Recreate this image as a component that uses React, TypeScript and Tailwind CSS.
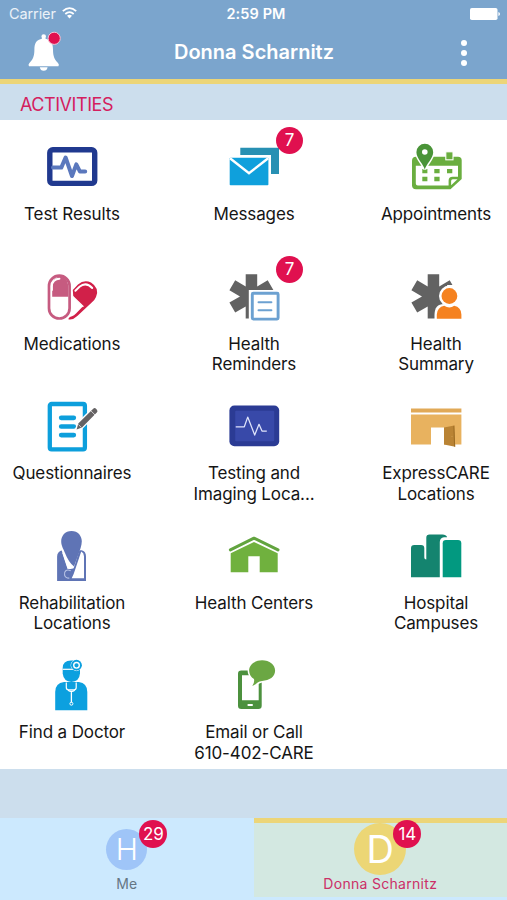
import type { ReactNode } from "react";

function Icon({ children }: { children: ReactNode }) {
  return (
    <svg width="50" height="50" viewBox="0 0 50 50" fill="none" className="block overflow-visible">
      {children}
    </svg>
  );
}

const TestResults = () => (
  <Icon>
    <rect x="2.8" y="7.8" width="44.9" height="33.6" rx="3" stroke="#20398f" strokeWidth="5.4" />
    <path d="M6 25.6H14.3L18.6 15.5L25 34L29.3 22.4L33 29.6H38.2" stroke="#5b78bd" strokeWidth="4" strokeLinecap="round" strokeLinejoin="round" />
  </Icon>
);

const Messages = () => (
  <Icon>
    <path d="M11.3 5.7H50V32H42V13H11.3Z" fill="#2790b3" />
    <rect x="0.7" y="15.7" width="38.7" height="27.6" rx="0.8" fill="#0fa0dc" />
    <path d="M1 16.2L20 31.2L39.2 16.2" stroke="#fff" strokeWidth="2.4" />
  </Icon>
);

const Appointments = () => (
  <Icon>
    <path d="M5 14.7H47Q50.7 14.7 50.7 18.4V37L39.5 47.3H5Q1 47.3 1 43.3V18.7Q1 14.7 5 14.7Z" fill="#6aae3f" />
    <path d="M4.8 23.7H47V34.8H41.5Q37.6 34.8 37.6 38.7V43.6H6.8Q4.8 43.6 4.8 41.6Z" fill="#fff" />
    <path d="M40.1 43.2V39.1Q40.1 37.3 41.9 37.3H46.5Z" fill="#fff" />
    <rect x="34.8" y="9.8" width="7.2" height="8" fill="#6aae3f" stroke="#fff" strokeWidth="1.1" />
    <path d="M11.3 27H16.4V31.3H11.3ZM23.3 27H28.6V31.3H23.3ZM36 27H41.3V31.3H36ZM11.3 34.7H16.4V39.2H11.3ZM23.3 34.7H28.6V39.2H23.3Z" fill="#6aae3f" />
    <path d="M13.8 27.5C12.5 22 5.4 16.5 5.4 10.2A8.4 8.4 0 0 1 22.2 10.2C22.2 16.5 15.1 22 13.8 27.5Z" fill="#4a9438" stroke="#fff" strokeWidth="3" paintOrder="stroke" />
    <circle cx="13.8" cy="10" r="2.8" fill="#fff" />
  </Icon>
);

const Medications = () => (
  <Icon>
    <rect x="2" y="3.7" width="20.6" height="42.8" rx="10.3" stroke="#c65b80" strokeWidth="2.7" />
    <path d="M5.2 24.7V14A7.2 8.5 0 0 1 21.3 14V24.7Z" fill="#c65b80" />
    <path d="M4.9 18V14.2A7.5 7.5 0 0 1 12.4 6.7" stroke="#fff" strokeWidth="2" strokeLinecap="round" />
    <path d="M25.8 18L31 12.6Q37 7 44 10.5Q52.8 16 49 25Q47.8 28 45 30.2L30.3 44Q25.7 48.4 21.3 47.3Q21.5 45.3 25 44.2Q27 43.4 29 41.4L35.8 34.6L26.3 25Z" fill="#d12049" />
    <path d="M28.4 18.8L32.5 14.8Q39 9.5 45.2 16" stroke="#fff" strokeWidth="2" strokeLinecap="round" />
    <path d="M25 23.7L36.4 34.8" stroke="#fff" strokeWidth="1.4" />
  </Icon>
);

const Asterisk = () => (
  <path
    d="M16.7 2.2H28.2V14.4L38.7 8.3L44.5 18.3L34 24.4L44.5 30.5L38.7 40.5L28.2 34.4V46.6H16.7V34.4L6.2 40.5L0.4 30.5L11 24.4L0.4 18.3L6.2 8.3L16.7 14.4Z"
    fill="#626262"
  />
);

const Reminders = () => (
  <Icon>
    <Asterisk />
    <rect x="19.8" y="18" width="33" height="33" fill="#fff" />
    <rect x="23.3" y="21.3" width="25.8" height="25.8" rx="1" stroke="#6ca1d1" strokeWidth="2.9" />
    <path d="M29.5 30.2H42.4M29.5 38.2H42.4" stroke="#6ca1d1" strokeWidth="2" strokeLinecap="round" />
  </Icon>
);

const Summary = () => (
  <Icon>
    <Asterisk />
    <path d="M36 13L50 13V30H40Z" fill="#fff" />
    <circle cx="38.4" cy="24" r="10.4" fill="#fff" />
    <path d="M23.5 49V43Q23.5 32 33 32H52V49Z" fill="#fff" />
    <circle cx="38.4" cy="24" r="7.9" fill="#f58220" />
    <path d="M25.8 46.8V42.5Q26.3 35.2 33.2 33.8Q38.5 37.2 43.2 33.8Q50.2 35.2 50.4 42.5V46.8Z" fill="#f58220" />
  </Icon>
);

const Questionnaires = () => (
  <Icon>
    <rect x="2.8" y="3" width="35.1" height="45.3" rx="1.8" stroke="#0d9fdc" strokeWidth="4.3" />
    <path d="M14.2 16.8H26.8M14.2 25.5H26.8M14.2 34.1H26.8" stroke="#0d9fdc" strokeWidth="4.7" strokeLinecap="round" />
    <path d="M29.6 28.5L31.3 22.6L46.2 7.8Q47.7 6.4 49.2 7.9L49.9 8.7Q51.2 10.2 49.8 11.6L35 26.4Z" fill="#656263" stroke="#fff" strokeWidth="2.8" paintOrder="stroke" />
    <path d="M43.7 9.6L48.1 14M31.4 23.5L34.3 26.4" stroke="#fff" strokeWidth="0.7" />
  </Icon>
);

const Testing = () => (
  <Icon>
    <rect x="0.4" y="4.6" width="49.8" height="40.6" rx="5" fill="#2b3b94" />
    <rect x="6.2" y="9.8" width="39" height="30.5" rx="1" fill="#3849a9" />
    <path d="M6.7 25.8H15.3L18.7 16.1L25.7 34.1L30 23.3L33 30.1H37.8" stroke="#dfe4fb" strokeWidth="1.25" strokeLinejoin="round" />
  </Icon>
);

const ExpressCare = () => (
  <Icon>
    <path d="M0 7.5H50.4V11.5H0Z" fill="#e1a957" />
    <path d="M0 13.5H50.4V43.5H33V26.5H20V43.5H0Z" fill="#e8b25f" />
    <path d="M33 26.5L43.3 24.5L44.2 45.8L33 43.5Z" fill="#b98334" />
    <path d="M42.4 25L43.3 24.5L44.2 45.8L43.1 45.4Z" fill="#9c6c24" />
    <circle cx="41" cy="35.5" r="0.5" fill="#d3a155" />
  </Icon>
);

const Hospital = () => (
  <Icon>
    <path d="M0 46.2V17.2Q0 13.9 3.3 13.9H10Q13.3 13.9 13.3 17.2V26.5Q13.3 28.4 15.3 28.4V6.8Q15.3 3.5 18.6 3.5H31.5Q35 3.5 36.2 6.2H33Q28.8 6.7 28.8 11V46.2Z" fill="#14846f" />
    <path d="M31.7 46.2V12.2Q31.7 8.9 35 8.9H47Q50.3 8.9 50.3 12.2V46.2Z" fill="#029980" />
  </Icon>
);

const Rehab = () => (
  <Icon>
    <path d="M15.5 19.3Q10.1 20.2 10.1 26V49.9H39V25.5Q39 20.4 34.6 19.3Z" fill="#5f74b5" />
    <path d="M14.2 18L20.8 37.5Q23.5 38.8 26.7 37.3L32.8 18Z" fill="#fff" />
    <path d="M24.5 -0.1C31 -0.1 34.8 4.7 34.8 10.3C34.8 14.8 33 19 30.8 25L27 35.5Q21.7 31.5 18 22C15.6 16.5 14.2 14.3 14.2 10.3C14.2 4.7 18 -0.1 24.5 -0.1Z" fill="#5f74b5" />
    <path d="M34.2 20.5Q36.9 21.8 37 25.3V47.3H24.7Q26.6 44 28.6 37.3Z" fill="#fff" />
    <path d="M15.9 21.5L21.3 37.7" stroke="#fff" strokeWidth="1.5" />
    <path d="M23.7 39.8C19.5 37.6 16.8 40.5 17.6 44.1Q18.5 47.2 22.3 47.1" stroke="#b9c4e6" strokeWidth="1.1" />
  </Icon>
);

const HealthCenters = () => (
  <Icon>
    <path d="M1.4 18.9L25 7.2L49 18.9" stroke="#62a43f" strokeWidth="3" strokeLinecap="round" strokeLinejoin="round" />
    <path d="M1.7 22.3L25 11L48.7 22.3V41.2H30.7V25.3H19.3V41.2H1.7Z" fill="#70b13e" />
  </Icon>
);

const Doctor = () => (
  <Icon>
    <path d="M15.7 8Q15.7 0.8 24 0.6H29Q33 2 33 9V13.5Q32.2 21.7 24.4 21.9Q16.7 21.7 15.7 13.5Z" fill="#0ca0df" />
    <path d="M15.7 9.3H26" stroke="#fff" strokeWidth="1.2" />
    <circle cx="29.5" cy="5.2" r="5.4" fill="#0ca0df" stroke="#fff" strokeWidth="1" paintOrder="stroke" />
    <circle cx="29.5" cy="5.3" r="2.8" stroke="#fff" strokeWidth="1.4" />
    <path d="M8.2 50.2V32Q8.2 23.3 17 22.1H31.8Q40.3 23.3 40.3 32V50.2Z" fill="#0ca0df" />
    <path d="M19.3 22.4V27.5Q19.3 29.8 21.6 29.8H27Q29.2 29.8 29.2 27.5V22.4" stroke="#fff" strokeWidth="1.2" />
    <path d="M21 30.3Q24.4 32.7 27.8 30.3M24.4 31V42.5" stroke="#fff" strokeWidth="1.3" />
    <circle cx="24.4" cy="43.7" r="1.5" stroke="#fff" strokeWidth="1" />
  </Icon>
);

const Contact = () => (
  <Icon>
    <path fillRule="evenodd" d="M12.3 10.4H29.4Q32.7 10.4 32.7 13.7V45.7Q32.7 49 29.4 49H12.3Q9 49 9 45.7V13.7Q9 10.4 12.3 10.4ZM13 15.2V40.3H29.7V15.2Z" fill="#4c913e" />
    <rect x="18.4" y="43.9" width="5.6" height="2.2" rx="1" fill="#fff" />
    <path d="M33.1 0.3C40.5 0.3 46.1 4.7 46.1 10.6C46.1 16.6 40.5 20.9 33.1 20.9C28.8 21 27 24.8 23.3 26.1Q25.8 22.8 25 19.1C22 17.2 20.1 14.3 20.1 10.6C20.1 4.7 25.8 0.3 33.1 0.3Z" fill="#6ba743" stroke="#fff" strokeWidth="3" paintOrder="stroke" />
  </Icon>
);

type Activity = { icon: ReactNode; lines: string[]; badge?: number };

const activities: Activity[] = [
  { icon: <TestResults />, lines: ["Test Results"] },
  { icon: <Messages />, lines: ["Messages"], badge: 7 },
  { icon: <Appointments />, lines: ["Appointments"] },
  { icon: <Medications />, lines: ["Medications"] },
  { icon: <Reminders />, lines: ["Health", "Reminders"], badge: 7 },
  { icon: <Summary />, lines: ["Health", "Summary"] },
  { icon: <Questionnaires />, lines: ["Questionnaires"] },
  { icon: <Testing />, lines: ["Testing and", "Imaging Loca..."] },
  { icon: <ExpressCare />, lines: ["ExpressCARE", "Locations"] },
  { icon: <Rehab />, lines: ["Rehabilitation", "Locations"] },
  { icon: <HealthCenters />, lines: ["Health Centers"] },
  { icon: <Hospital />, lines: ["Hospital", "Campuses"] },
  { icon: <Doctor />, lines: ["Find a Doctor"] },
  { icon: <Contact />, lines: ["Email or Call", "610-402-CARE"] },
];

function ActivityTile({ icon, lines, badge }: Activity) {
  return (
    <div className="flex flex-col items-center pt-[22px]">
      <div className="relative">
        {icon}
        {badge !== undefined && (
          <span className="absolute -top-[15.5px] left-[47px] flex size-[27px] items-center justify-center rounded-full bg-[#e0104f] text-[17px] leading-none text-white">
            {badge}
          </span>
        )}
      </div>
      <div className="mt-[12px] text-center text-[17px] leading-[20.4px] tracking-[-0.12px] whitespace-nowrap text-[#151515]">
        {lines.map((line) => (
          <div key={line}>{line}</div>
        ))}
      </div>
    </div>
  );
}

function CountBadge({ count, className }: { count: number; className: string }) {
  return (
    <span className={`absolute flex size-7 items-center justify-center rounded-full bg-[#e0104f] text-[17px] leading-none tracking-[-0.3px] text-white ${className}`}>
      {count}
    </span>
  );
}

export default function App() {
  return (
    <div className="flex h-[900px] w-[507px] flex-col overflow-hidden bg-[#ccdeed] font-['Inter','Liberation_Sans',sans-serif]">
      <header className="h-[79px] shrink-0 bg-[#7ba5cd] text-white">
        <div className="grid h-7 grid-cols-3 items-center pr-[7px] pl-[9px] text-[14.5px] leading-none">
          <div className="flex items-center gap-[7px] text-white/85">
            <span className="tracking-[-0.1px]">Carrier</span>
            <svg width="15" height="12" viewBox="0 0 15 12" fill="none" stroke="#fff" strokeWidth="1.8" className="-mt-[2px] -ml-px">
              <path d="M0.8 4.2Q7.5 -2 14.2 4.2M3.3 7Q7.5 3.2 11.7 7" />
              <path d="M5 8.7Q7.5 6.6 10 8.7L7.5 11.4Z" fill="#fff" stroke="none" />
            </svg>
          </div>
          <div className="pl-[3px] text-center font-semibold tracking-[0.1px]">2:59 PM</div>
          <svg width="30" height="12" viewBox="0 0 30 12" fill="#fff" className="-mt-px justify-self-end">
            <rect width="27.5" height="12" rx="1.8" />
            <path d="M28.4 4Q30 4.5 30 6Q30 7.5 28.4 8Z" />
          </svg>
        </div>
        <div className="grid h-[48px] grid-cols-[90px_1fr_90px] items-center">
          <svg width="34" height="40" viewBox="0 0 34 40" className="-mt-[6px] ml-[28px] overflow-visible">
            <path d="M15.7 5.2A2.3 2.3 0 0 1 15.7 9.8A2.3 2.3 0 0 1 15.7 5.2ZM13.8 8H17.6V12H13.8Z" fill="#fff" />
            <path d="M15.7 9.8C23.5 9.8 25 15 25 20.5C25 27.5 26.7 31 30 34Q31.6 35.8 30.4 37.3H1Q-0.2 35.8 1.4 34C4.7 31 6.4 27.5 6.4 20.5C6.4 15 7.9 9.8 15.7 9.8ZM11.8 38.2H19.6Q19 41.7 15.7 41.7Q12.4 41.7 11.8 38.2Z" fill="#fff" />
            <circle cx="26.2" cy="9.3" r="6.1" fill="#e0104f" stroke="#f3c3d3" />
          </svg>
          <h1 className="pl-px text-center text-[20px] leading-none font-semibold">Donna Scharnitz</h1>
          <div className="flex flex-col items-center gap-[4px] pt-[2px] pl-[4px]">
            <i className="size-[6px] rounded-full bg-white" />
            <i className="size-[6px] rounded-full bg-white" />
            <i className="size-[6px] rounded-full bg-white" />
          </div>
        </div>
      </header>
      <div className="h-[5px] shrink-0 bg-[#ecd578]" />
      <h2 className="flex h-9 shrink-0 items-center pt-[6px] pl-5 text-[18px] leading-none tracking-[-0.45px] text-[#d4205e]">ACTIVITIES</h2>
      <main className="grid h-[648.5px] shrink-0 auto-rows-[129.6px] grid-cols-3 gap-x-10 bg-white pl-px">
        {activities.map((activity) => (
          <ActivityTile key={activity.lines.join(" ")} {...activity} />
        ))}
      </main>
      <div className="h-[49px] shrink-0" />
      <nav className="grid flex-1 grid-cols-2 bg-[#cce9fe]">
        <div className="flex flex-col items-center pt-[11px]">
          <div className="relative flex size-[41px] items-center justify-center rounded-full bg-[#9fc5f8] text-[30px] leading-none font-light text-white">
            H
            <CountBadge count={29} className="-top-[8.5px] left-[33px] font-normal" />
          </div>
          <span className="mt-[5px] text-[14px] leading-[18px] text-[#657684]">Me</span>
        </div>
        <div className="mb-[3px] flex flex-col items-center border-t-[5px] border-[#ecd578] bg-[#d3e8e1]">
          <div className="relative flex size-[52px] items-center justify-center rounded-full bg-[#ecd675] text-[38px] leading-none text-white">
            D
            <CountBadge count={14} className="-top-[2.5px] left-[39px]" />
          </div>
          <span className="text-[14px] leading-[18px] tracking-[0.3px] text-[#cc2f67]">Donna Scharnitz</span>
        </div>
      </nav>
    </div>
  );
}
